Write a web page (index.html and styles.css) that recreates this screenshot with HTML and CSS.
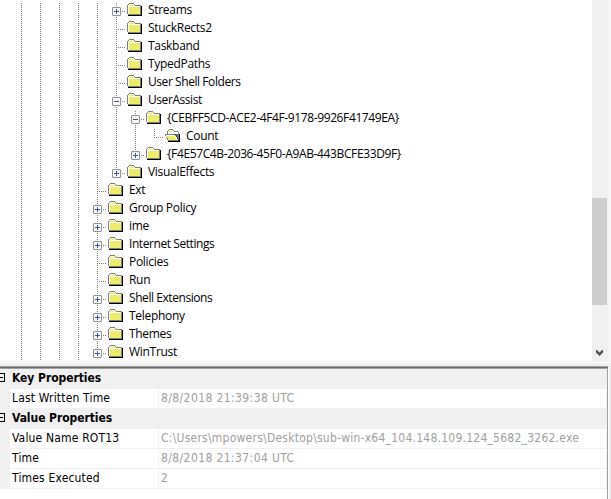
FILE: index.html
```html
<!DOCTYPE html>
<html lang="en">
<head>
<meta charset="utf-8">
<title>Registry Viewer</title>
<link rel="stylesheet" href="styles.css">
</head>
<body>
<svg class="defs" width="0" height="0">
  <defs>
    <pattern id="dither" width="2" height="2" patternUnits="userSpaceOnUse">
      <rect width="2" height="2" fill="#d9d9d9"/>
      <rect width="1" height="1" fill="#ff0"/>
      <rect x="1" y="1" width="1" height="1" fill="#ff0"/>
    </pattern>
    <symbol id="folder" viewBox="0 0 15 13">
      <path fill="#000" d="M14 3h1v10H1v-1h13z"/>
      <path fill="#808080" d="M2 0h5v1h1v1h6v10H1v-1H0V2h1V1h1z"/>
      <path fill="#fff" d="M2 1h5v1h1v1h5v1H2v7H1V2h1z"/>
      <path fill="url(#dither)" d="M2 2h5v1H2zM2 4h11v7H2z"/>
    </symbol>
    <symbol id="folder-open" viewBox="0 0 15 13">
      <path fill="#000" d="M14 5h1v8H3v-1h11z"/>
      <path fill="#808080" d="M3 1h1V0h4v1h1v1h4v1h1v9H3v-1H2V9H1V7H0V5h2V2h1z"/>
      <path fill="#fff" d="M4 1h4v1h1v1h4v2H3V2h1zM1 6h9v1h1v1h1v2h1v1h-1v-1h-1V8h-1V7H2v1H1z"/>
      <path fill="url(#dither)" d="M4 2h4v1H4zM2 7h8v1h1v2h1v1H3V9H2z"/>
      <path fill="#404040" d="M10 5h1v1h1v2h1v2h1v2h-1v-2h-1V8h-1V6h-1z"/>
    </symbol>
    <symbol id="plus" viewBox="0 0 9 9">
      <rect x=".5" y=".5" width="8" height="8" rx=".5" fill="#f8f8f8" stroke="#919191"/>
      <path fill="#3d5a9c" d="M2 4h5v1H2zM4 2h1v5H4z"/>
    </symbol>
    <symbol id="minus" viewBox="0 0 9 9">
      <rect x=".5" y=".5" width="8" height="8" rx=".5" fill="#f8f8f8" stroke="#919191"/>
      <path fill="#3d5a9c" d="M2 4h5v1H2z"/>
    </symbol>
  </defs>
</svg>
<main class="app">
  <section class="tree-pane">
    <div class="tree">
      <div class="row"><i class="v"></i><i class="v"></i><i class="v"></i><i class="v"></i><i class="v"></i><i class="v h"><svg class="box"><use href="#plus"/></svg></i><svg class="icon"><use href="#folder"/></svg><span>Streams</span></div>
      <div class="row"><i class="v"></i><i class="v"></i><i class="v"></i><i class="v"></i><i class="v"></i><i class="v h"></i><svg class="icon"><use href="#folder"/></svg><span>StuckRects2</span></div>
      <div class="row"><i class="v"></i><i class="v"></i><i class="v"></i><i class="v"></i><i class="v"></i><i class="v h"></i><svg class="icon"><use href="#folder"/></svg><span>Taskband</span></div>
      <div class="row"><i class="v"></i><i class="v"></i><i class="v"></i><i class="v"></i><i class="v"></i><i class="v h"></i><svg class="icon"><use href="#folder"/></svg><span>TypedPaths</span></div>
      <div class="row"><i class="v"></i><i class="v"></i><i class="v"></i><i class="v"></i><i class="v"></i><i class="v h"></i><svg class="icon"><use href="#folder"/></svg><span class="tight">User Shell Folders</span></div>
      <div class="row"><i class="v"></i><i class="v"></i><i class="v"></i><i class="v"></i><i class="v"></i><i class="v h"><svg class="box"><use href="#minus"/></svg></i><svg class="icon"><use href="#folder"/></svg><span class="tight">UserAssist</span></div>
      <div class="row"><i class="v"></i><i class="v"></i><i class="v"></i><i class="v"></i><i class="v"></i><i class="v"></i><i class="v h"><svg class="box"><use href="#minus"/></svg></i><svg class="icon"><use href="#folder"/></svg><span class="guid">{CEBFF5CD-ACE2-4F4F-9178-9926F41749EA}</span></div>
      <div class="row"><i class="v"></i><i class="v"></i><i class="v"></i><i class="v"></i><i class="v"></i><i class="v"></i><i class="v"></i><i class="v h last"></i><svg class="icon"><use href="#folder-open"/></svg><span>Count</span></div>
      <div class="row"><i class="v"></i><i class="v"></i><i class="v"></i><i class="v"></i><i class="v"></i><i class="v"></i><i class="v h last"><svg class="box"><use href="#plus"/></svg></i><svg class="icon"><use href="#folder"/></svg><span class="guid">{F4E57C4B-2036-45F0-A9AB-443BCFE33D9F}</span></div>
      <div class="row"><i class="v"></i><i class="v"></i><i class="v"></i><i class="v"></i><i class="v"></i><i class="v h last"><svg class="box"><use href="#plus"/></svg></i><svg class="icon"><use href="#folder"/></svg><span>VisualEffects</span></div>
      <div class="row"><i class="v"></i><i class="v"></i><i class="v"></i><i class="v"></i><i class="v h"></i><svg class="icon"><use href="#folder"/></svg><span>Ext</span></div>
      <div class="row"><i class="v"></i><i class="v"></i><i class="v"></i><i class="v"></i><i class="v h"><svg class="box"><use href="#plus"/></svg></i><svg class="icon"><use href="#folder"/></svg><span>Group Policy</span></div>
      <div class="row"><i class="v"></i><i class="v"></i><i class="v"></i><i class="v"></i><i class="v h"><svg class="box"><use href="#plus"/></svg></i><svg class="icon"><use href="#folder"/></svg><span>ime</span></div>
      <div class="row"><i class="v"></i><i class="v"></i><i class="v"></i><i class="v"></i><i class="v h"><svg class="box"><use href="#plus"/></svg></i><svg class="icon"><use href="#folder"/></svg><span class="tight">Internet Settings</span></div>
      <div class="row"><i class="v"></i><i class="v"></i><i class="v"></i><i class="v"></i><i class="v h"></i><svg class="icon"><use href="#folder"/></svg><span>Policies</span></div>
      <div class="row"><i class="v"></i><i class="v"></i><i class="v"></i><i class="v"></i><i class="v h"></i><svg class="icon"><use href="#folder"/></svg><span>Run</span></div>
      <div class="row"><i class="v"></i><i class="v"></i><i class="v"></i><i class="v"></i><i class="v h"><svg class="box"><use href="#plus"/></svg></i><svg class="icon"><use href="#folder"/></svg><span class="tight">Shell Extensions</span></div>
      <div class="row"><i class="v"></i><i class="v"></i><i class="v"></i><i class="v"></i><i class="v h"><svg class="box"><use href="#plus"/></svg></i><svg class="icon"><use href="#folder"/></svg><span>Telephony</span></div>
      <div class="row"><i class="v"></i><i class="v"></i><i class="v"></i><i class="v"></i><i class="v h"><svg class="box"><use href="#plus"/></svg></i><svg class="icon"><use href="#folder"/></svg><span>Themes</span></div>
      <div class="row"><i class="v"></i><i class="v"></i><i class="v"></i><i class="v"></i><i class="v h last"><svg class="box"><use href="#plus"/></svg></i><svg class="icon"><use href="#folder"/></svg><span>WinTrust</span></div>
    </div>
    <div class="scrollbar">
      <div class="thumb"></div>
      <svg class="arrow" width="7" height="6" viewBox="0 0 7 6"><path fill="#505050" d="M0 0h1l2.500 2.500L6 0h1v2.500L3.500 6 0 2.500z"/></svg>
    </div>
  </section>
  <section class="props">
    <div class="grid">
      <div class="group"><svg class="toggle" width="5" height="9"><path d="M0 0h5v9H0V8h4V1H0zM0 4h3v1H0z"/></svg><b>Key Properties</b></div>
      <div class="prop"><span class="name">Last Written Time</span><span class="value">8/8/2018 21:39:38 UTC</span></div>
      <div class="group"><svg class="toggle" width="5" height="9"><path d="M0 0h5v9H0V8h4V1H0zM0 4h3v1H0z"/></svg><b>Value Properties</b></div>
      <div class="prop"><span class="name">Value Name ROT13</span><span class="value path">C:\Users\mpowers\Desktop\sub-win-x64_104.148.109.124_5682_3262.exe</span></div>
      <div class="prop"><span class="name">Time</span><span class="value">8/8/2018 21:37:04 UTC</span></div>
      <div class="prop"><span class="name">Times Executed</span><span class="value">2</span></div>
    </div>
  </section>
</main>
</body>
</html>
```
FILE: styles.css
```css
* { box-sizing: border-box; }
body { margin: 0; background: #f0f0f0; overflow: hidden; }
.defs { display: block; }
.app { display: flex; flex-direction: column; width: 611px; height: 499px; }

.tree-pane {
  display: flex;
  width: 610px;
  height: 363px;
  border-right: 1px solid #fff;
  border-bottom: 1px solid #fff;
  background: #f0f0f0;
}
.tree {
  width: 592px;
  height: 361px;
  padding: 2px 0 0 12px;
  overflow: hidden;
  background: #fff;
}
.row {
  display: flex;
  align-items: center;
  height: 18px;
  font: 12px/18px "Open Sans", "Noto Sans", sans-serif;
  letter-spacing: -0.3px;
  color: #000;
  white-space: nowrap;
}
.row span { padding: 0 0 3px 6px; }
.row .tight { letter-spacing: -0.43px; }
.row .guid { letter-spacing: -0.38px; }
.row i {
  flex: none;
  width: 19px;
  height: 18px;
  padding: 5px 0 0 5px;
  background-repeat: no-repeat;
}
.v {
  background-image: repeating-linear-gradient(#fff 0 1px, #808080 1px 2px);
  background-size: 1px 18px;
  background-position: 9px 0;
}
.v.h {
  background-image:
    repeating-linear-gradient(#fff 0 1px, #808080 1px 2px),
    repeating-linear-gradient(90deg, #808080 0 1px, #fff 1px 2px);
  background-size: 1px 18px, 9px 1px;
  background-position: 9px 0, 11px 9px;
}
.v.h.last { background-size: 1px 10px, 9px 1px; }
.box { display: block; width: 9px; height: 9px; }
.icon { flex: none; width: 15px; height: 13px; margin: 0 0 3px 1px; shape-rendering: crispEdges; }

.scrollbar { width: 17px; height: 361px; padding-top: 198px; }
.thumb { width: 15px; height: 107px; background: #cdcdcd; }
.arrow { display: block; margin: 45px 0 0 4px; }

.props {
  width: 609px;
  height: 133px;
  margin-top: 3px;
  border-top: 1px solid #a0a0a0;
  border-right: 1px solid #fff;
}
.grid {
  width: 608px;
  height: 132px;
  border-top: 1px solid #696969;
  border-right: 1px solid #a0a0a0;
  background: #fff;
  box-shadow: inset 0 1px #a0a0a0;
  padding-top: 1px;
  font: 12px/19px "DejaVu Sans Condensed", "DejaVu Sans", sans-serif;
}
.group { display: flex; height: 20px; background: #f0f0f0; }
.group b { padding-left: 7px; font-size: 12px; letter-spacing: -0.06px; }
.toggle { margin-top: 4px; }
.prop {
  display: flex;
  width: 607px;
  height: 20px;
  border-left: 10px solid #f0f0f0;
  border-right: 1px solid #f0f0f0;
  border-bottom: 1px solid #f0f0f0;
  white-space: nowrap;
}
.name { width: 149px; padding-left: 2px; border-right: 1px solid #f0f0f0; letter-spacing: 0.17px; }
.value { padding-left: 2px; color: #a0a0a0; letter-spacing: 0.4px; }
.value.path { letter-spacing: 0.24px; }
```
